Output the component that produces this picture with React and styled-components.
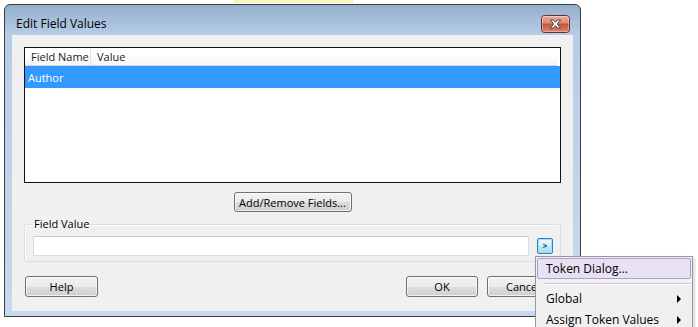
import React from "react";
import styled, { createGlobalStyle } from "styled-components";

const Global = createGlobalStyle`
  html, body { margin: 0; padding: 0; background: #ffffff; overflow: hidden; }
  body { font-family: "Open Sans", "Noto Sans", sans-serif; font-size: 11px; color: #000; }
  * { box-sizing: border-box; }
`;

const Page = styled.div`
  position: relative;
  width: 698px;
  height: 327px;
  padding-left: 4px;
  display: flex;
  flex-direction: column;
  overflow: hidden;
`;

const Backdrop = styled.div`
  margin-left: 229px;
  width: 120px;
  height: 3px;
  background: repeating-conic-gradient(#f1e45e 0 25%, #ffffff 0 50%) 0 0 / 2px 2px;
  opacity: 0.85;
`;

const Window = styled.div`
  margin-top: 1px;
  width: 577px;
  height: 313px;
  border: 1px solid #3d3d3d;
  border-radius: 6px 6px 0 0;
  background: linear-gradient(to bottom, #94afcd 0, #b7cde6 30px, #c0d4ea 60%, #c6d9ee 100%);
  padding: 0 7px 5px 7px;
  display: flex;
  flex-direction: column;
`;

const TitleBar = styled.div`
  height: 30px;
  margin: 0 -7px;
  padding: 0 10px 0 11px;
  display: flex;
  align-items: center;
  justify-content: space-between;
`;

const Title = styled.span`
  font-size: 12px;
  padding-top: 7px;
  color: #000;
`;

const CloseButton = styled.div`
  width: 29px;
  height: 18px;
  margin-top: 7px;
  display: flex;
`;

const Client = styled.div`
  flex: 1;
  background: #f0f0f0;
  padding: 12px 12px 13px 12px;
  display: flex;
  flex-direction: column;
`;

const ListView = styled.div`
  height: 136px;
  border: 1px solid #121212;
  background: #fff;
  display: flex;
  flex-direction: column;
`;

const Header = styled.div`
  height: 18px;
  display: flex;
  background: linear-gradient(to bottom, #ffffff 0, #ffffff 40%, #f3f4f6 100%);
  border-bottom: 1px solid #d5d5d5;
  margin-right: 3px;
`;

const HeaderCell = styled.div`
  width: ${(p) => p.$w}px;
  padding-left: 6px;
  line-height: 17px;
  color: #1a1a1a;
  border-right: ${(p) => (p.$div ? "1px solid #e2e3e5" : "none")};
`;

const Row = styled.div`
  height: 22px;
  display: flex;
  align-items: center;
  padding-left: 3px;
  background: ${(p) => (p.$selected ? "#3399ff" : "transparent")};
  color: ${(p) => (p.$selected ? "#ffffff" : "#000")};
`;

const CenterRow = styled.div`
  display: flex;
  justify-content: center;
  margin-top: 9px;
`;

const Button = styled.button`
  font: inherit;
  color: #000;
  height: ${(p) => p.$h || 21}px;
  width: ${(p) => (p.$w ? `${p.$w}px` : "auto")};
  padding: 0;
  white-space: nowrap;
  border: 1px solid #707070;
  border-radius: 3px;
  background: linear-gradient(to bottom, #f2f2f2 0%, #ebebeb 50%, #dddddd 51%, #cfcfcf 100%);
  box-shadow: inset 0 0 0 1px rgba(255, 255, 255, 0.7);
  display: flex;
  align-items: center;
  justify-content: center;
  line-height: 1;
`;

const GroupBox = styled.fieldset`
  margin: 5px 0 0 0;
  padding: 5px 6px 5px 8px;
  border: 1px solid #d5dfe5;
  border-radius: 3px;
  display: flex;
  align-items: center;
  gap: 8px;
  box-shadow: inset 1px 1px 0 #ffffff;
`;

const Legend = styled.legend`
  padding: 0 1px;
  line-height: 14px;
  color: #000;
`;

const TextInput = styled.div`
  width: 496px;
  height: 20px;
  background: #fff;
  border: 1px solid #d9dde3;
  border-top-color: #c5cbd3;
`;

const MiniButton = styled.div`
  width: 16px;
  height: 16px;
  border: 1px solid #3c7fb1;
  border-radius: 2px;
  background: linear-gradient(to bottom, #eaf6fd 0%, #d9f0fc 50%, #bee6fd 51%, #a7d9f5 100%);
  box-shadow: inset 0 0 0 1px #9ee0fb;
  display: flex;
  align-items: center;
  justify-content: center;
  font-size: 8px;
  font-weight: 700;
  color: #333;
  line-height: 1;
`;

const ButtonRow = styled.div`
  margin-top: 14px;
  display: flex;
  align-items: center;
  gap: 9px;
  padding: 0 2px 0 1px;
`;

const Spacer = styled.div`
  flex: 1;
`;

const Menu = styled.div`
  position: absolute;
  left: 535px;
  top: 256px;
  width: 158px;
  height: 71px;
  overflow: hidden;
  border: 1px solid #979797;
  border-bottom: none;
  background: #f0f0f0;
  padding: 1px;
  box-shadow: 2px 2px 3px rgba(0, 0, 0, 0.15);
  font-size: 12px;
`;

const MenuItem = styled.div`
  height: 21px;
  display: flex;
  align-items: center;
  justify-content: space-between;
  padding: 0 9px 0 8px;
  border: 1px solid ${(p) => (p.$active ? "#b29ad9" : "transparent")};
  border-radius: 2px;
  background: ${(p) => (p.$active ? "#e7e1f1" : "transparent")};
  color: #000;
`;

const Separator = styled.div`
  margin: 4px 0 3px 6px;
  height: 2px;
  border-top: 1px solid #c9c9c9;
  border-bottom: 1px solid #ffffff;
`;

const Arrow = styled.span`
  width: 0;
  height: 0;
  border-top: 4px solid transparent;
  border-bottom: 4px solid transparent;
  border-left: 4px solid #000;
`;

function CloseIcon() {
  return (
    <svg width="29" height="18" viewBox="0 0 29 18">
      <defs>
        <linearGradient id="cg" x1="0" y1="0" x2="0" y2="1">
          <stop offset="0" stopColor="#eab0a2" />
          <stop offset="0.45" stopColor="#d98770" />
          <stop offset="0.5" stopColor="#c4533a" />
          <stop offset="1" stopColor="#d68a73" />
        </linearGradient>
      </defs>
      <rect x="0.5" y="0.5" width="28" height="17" rx="3" fill="url(#cg)" stroke="#6b2d2a" />
      <rect x="1.5" y="1.5" width="26" height="15" rx="2" fill="none" stroke="rgba(255,255,255,0.35)" />
      <path
        d="M9.5 5 L12.5 5 L14.5 7.3 L16.5 5 L19.5 5 L16.3 9 L19.5 13 L16.5 13 L14.5 10.7 L12.5 13 L9.5 13 L12.7 9 Z"
        fill="#ffffff"
        stroke="#3b3b3b"
        strokeWidth="0.9"
        strokeLinejoin="round"
      />
    </svg>
  );
}

export default function App() {
  return (
    <>
      <Global />
      <Page>
        <Backdrop />
        <Window>
          <TitleBar>
            <Title>Edit Field Values</Title>
            <CloseButton>
              <CloseIcon />
            </CloseButton>
          </TitleBar>
          <Client>
            <ListView>
              <Header>
                <HeaderCell $w={66} $div>Field Name</HeaderCell>
                <HeaderCell $w={80}>Value</HeaderCell>
              </Header>
              <Row $selected>Author</Row>
            </ListView>
            <CenterRow>
              <Button $w={118} $h={20}>Add/Remove Fields...</Button>
            </CenterRow>
            <GroupBox>
              <Legend>Field Value</Legend>
              <TextInput />
              <MiniButton>&gt;</MiniButton>
            </GroupBox>
            <ButtonRow>
              <Button $w={73}>Help</Button>
              <Spacer />
              <Button $w={72}>OK</Button>
              <Button $w={72}>Cancel</Button>
            </ButtonRow>
          </Client>
        </Window>
        <Menu>
          <MenuItem $active>Token Dialog...</MenuItem>
          <Separator />
          <MenuItem>
            Global <Arrow />
          </MenuItem>
          <MenuItem>
            Assign Token Values <Arrow />
          </MenuItem>
        </Menu>
      </Page>
    </>
  );
}
